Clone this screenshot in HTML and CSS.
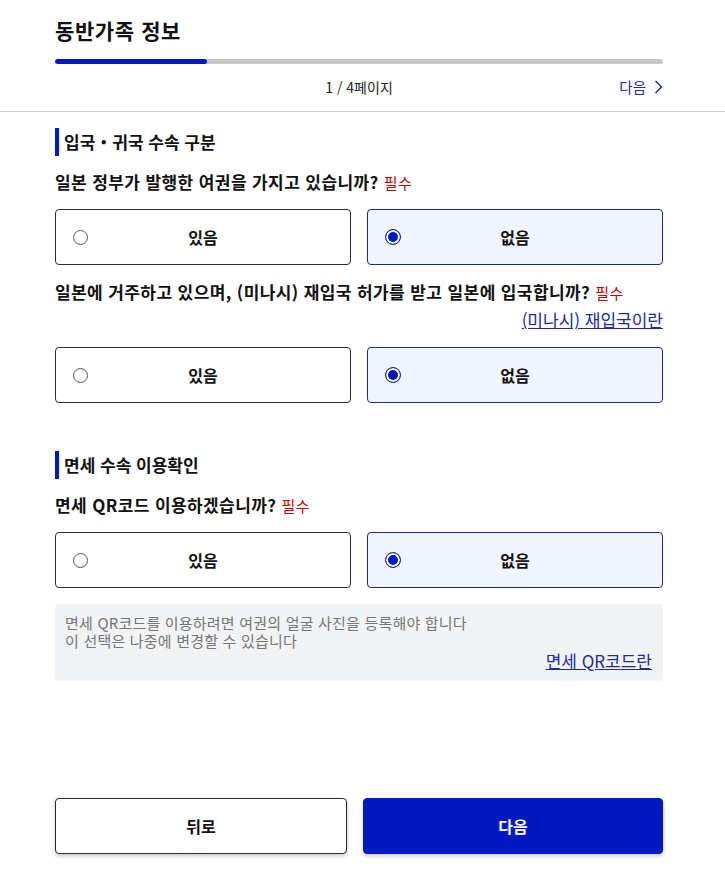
FILE: index.html
```html
<!DOCTYPE html>
<html lang="ko">
<head>
<meta charset="utf-8">
<title>동반가족 정보</title>
<link rel="stylesheet" href="styles.css">
</head>
<body>
<div class="page">
  <header class="head">
    <h1 class="title">동반가족 정보</h1>
    <div class="progress"><div class="progress-fill" style="width:25%"></div></div>
    <div class="pager">
      <span class="pager-spacer"></span>
      <span class="pager-count">1 / 4페이지</span>
      <a class="pager-next" href="#">다음
        <svg class="chev" width="9" height="14" viewBox="0 0 9 14"><path d="M1.5 1 L7.5 7 L1.5 13" fill="none" stroke="currentColor" stroke-width="1.5"/></svg>
      </a>
    </div>
  </header>

  <main class="main">
    <section class="section">
      <h2 class="sec-title">입국・귀국 수속 구분</h2>

      <p class="question">일본 정부가 발행한 여권을 가지고 있습니까? <span class="req">필수</span></p>
      <div class="options">
        <div class="opt"><span class="radio"></span><span class="opt-label">있음</span></div>
        <div class="opt opt-on"><span class="radio radio-on"></span><span class="opt-label">없음</span></div>
      </div>

      <p class="question">일본에 거주하고 있으며, (미나시) 재입국 허가를 받고 일본에 입국합니까? <span class="req">필수</span></p>
      <div class="link-row"><a class="link" href="#">(미나시) 재입국이란</a></div>
      <div class="options options-after-link">
        <div class="opt"><span class="radio"></span><span class="opt-label">있음</span></div>
        <div class="opt opt-on"><span class="radio radio-on"></span><span class="opt-label">없음</span></div>
      </div>
    </section>

    <section class="section section-2">
      <h2 class="sec-title">면세 수속 이용확인</h2>

      <p class="question">면세 QR코드 이용하겠습니까? <span class="req">필수</span></p>
      <div class="options">
        <div class="opt"><span class="radio"></span><span class="opt-label">있음</span></div>
        <div class="opt opt-on"><span class="radio radio-on"></span><span class="opt-label">없음</span></div>
      </div>

      <div class="info">
        <p class="info-line">면세 QR코드를 이용하려면 여권의 얼굴 사진을 등록해야 합니다</p>
        <p class="info-line">이 선택은 나중에 변경할 수 있습니다</p>
        <div class="info-link-row"><a class="link" href="#">면세 QR코드란</a></div>
      </div>
    </section>
  </main>

  <footer class="foot">
    <button class="btn btn-back">뒤로</button>
    <button class="btn btn-next">다음</button>
  </footer>
</div>
</body>
</html>
```

FILE: styles.css
```css
* { box-sizing: border-box; }

html, body {
  margin: 0;
  padding: 0;
  background: #fff;
}

body {
  font-family: "Noto Sans CJK KR", "Noto Sans", "Liberation Sans", sans-serif;
  color: #111;
}

.page {
  min-height: 100vh;
  display: flex;
  flex-direction: column;
}

.head {
  padding: 16px 62px 14px 55px;
  border-bottom: 1px solid #cfcfcf;
}

.title {
  margin: 0;
  font-size: 21px;
  line-height: 28px;
  font-weight: 700;
  letter-spacing: 0.6px;
}

.progress {
  margin-top: 15px;
  height: 5px;
  border-radius: 3px;
  background: #c8c8c8;
  overflow: hidden;
}

.progress-fill {
  height: 100%;
  border-radius: 3px;
  background: #0019c1;
}

.pager {
  margin-top: 13px;
  display: grid;
  grid-template-columns: 1fr auto 1fr;
  align-items: center;
  font-size: 14px;
  line-height: 20px;
}

.pager-count { color: #222; }

.pager-next {
  justify-self: end;
  display: flex;
  align-items: center;
  gap: 8px;
  color: #1a2ba3;
  text-decoration: none;
  font-size: 14.5px;
}

.chev { display: block; }

.main {
  flex: 1;
  padding: 0 62px 0 55px;
}

.section { margin-top: 16px; }
.section-2 { margin-top: 48px; }

.sec-title {
  margin: 0;
  font-size: 17px;
  line-height: 28px;
  font-weight: 700;
  border-left: 4px solid #0019c1;
  padding-left: 5px;
}

.question {
  margin: 14px 0 0;
  font-size: 17px;
  line-height: 24px;
  font-weight: 700;
  letter-spacing: 0.4px;
}

.options + .question { margin-top: 15px; }

.req {
  font-size: 15px;
  font-weight: 400;
  color: #c40000;
  letter-spacing: 0.3px;
}

.link-row {
  margin-top: 4px;
  display: flex;
  justify-content: flex-end;
  font-size: 17px;
  line-height: 22px;
}

.link {
  color: #1d2b9e;
  text-decoration: underline;
}

.options {
  margin-top: 14px;
  display: grid;
  grid-template-columns: 1fr 1fr;
  gap: 16px;
}

.options-after-link { margin-top: 16px; }

.opt {
  height: 56px;
  border: 1px solid #2b2b2b;
  border-radius: 4px;
  background: #fff;
  display: grid;
  grid-template-columns: 1fr auto 1fr;
  align-items: center;
  padding-left: 17px;
  padding-right: 17px;
}

.opt-on {
  border-color: #1b2a8e;
  background: #f1f5ff;
}

.radio {
  width: 15px;
  height: 15px;
  border-radius: 50%;
  border: 1px solid #555;
  background: #fff;
  justify-self: start;
}

.radio-on {
  width: 16px;
  height: 16px;
  border: 1.5px solid #1b2a8e;
  background: #0019c1;
  box-shadow: inset 0 0 0 2px #fff;
}

.opt-label {
  font-size: 16px;
  line-height: 22px;
  font-weight: 700;
}

.info {
  margin-top: 16px;
  background: #f2f3f5;
  border-radius: 4px;
  padding: 10px 11px 10px 10px;
}

.info-line {
  margin: 0;
  font-size: 15px;
  line-height: 18px;
  letter-spacing: 0.2px;
  color: #767676;
}

.info-link-row {
  margin-top: 1px;
  display: flex;
  justify-content: flex-end;
  font-size: 17px;
  line-height: 20px;
}

.foot {
  padding: 24px 62px 27px 55px;
  display: grid;
  grid-template-columns: 292fr 300fr;
  gap: 16px;
}

.btn {
  height: 56px;
  border-radius: 4px;
  font-family: inherit;
  font-size: 16px;
  font-weight: 700;
  box-shadow: 0 2px 4px rgba(0, 0, 0, 0.22);
  cursor: pointer;
}

.btn-back {
  background: #fff;
  border: 1px solid #2b2b2b;
  color: #111;
}

.btn-next {
  background: #0019c1;
  border: 1px solid #0019c1;
  color: #fff;
}
```
